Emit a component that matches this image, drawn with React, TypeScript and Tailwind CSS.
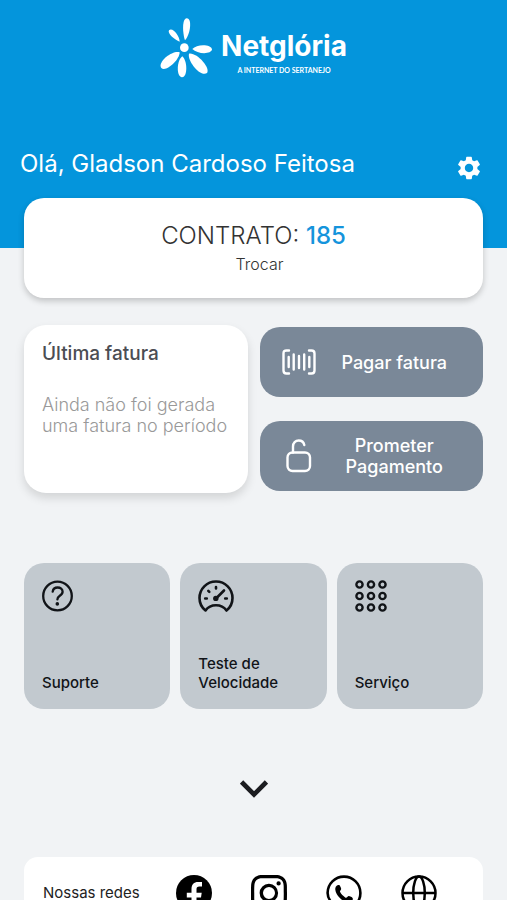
import { BsInstagram } from 'react-icons/bs';
import { MdSettings } from 'react-icons/md';

const FlowerMark = () => (
  <svg viewBox="30 24 159 180" className="w-[53px] h-[60px]" fill="#fff" aria-hidden="true">
    <circle cx="103" cy="113" r="13" />
    <path d="M105 91C99 76 94 27 110 25C129 25 119 78 105 91Z" />
    <path d="M89 95C74 91 51 69 57 61C67 50 89 78 89 95Z" />
    <path d="M127 117C140 101 184 102 186 118C184 134 142 133 127 117Z" />
    <path d="M117 131C141 127 182 174 171 189C152 203 111 153 117 131Z" />
    <path d="M97 139C112 151 114 201 96 202C78 200 80 151 97 139Z" />
    <path d="M89 127C89 150 47 188 34 174C21 158 65 120 89 127Z" />
  </svg>
);

const Barcode = () => (
  <svg viewBox="0 0 34 26" className="w-[34px] h-[26px]" fill="none" stroke="currentColor" strokeWidth="2.4" strokeLinecap="round" aria-hidden="true">
    <path d="M7 1.5H4.5Q1.5 1.5 1.5 4.5V21.5Q1.5 24.5 4.5 24.5H7M27 1.5H29.5Q32.5 1.5 32.5 4.5V21.5Q32.5 24.5 29.5 24.5H27" />
    <path d="M6.7 8V18M11.7 5.5V20.5M17 7V19M22.2 5.5V20.5M27.3 8V18" />
  </svg>
);

const OpenLock = () => (
  <svg viewBox="0 0 26 34" className="w-[26px] h-[34px]" fill="none" stroke="currentColor" strokeWidth="2.4" strokeLinecap="round" aria-hidden="true">
    <rect x="1.5" y="13.5" width="22.5" height="18.5" rx="5" />
    <path d="M7 13.5V7.5C7 4 9.5 1.5 12.7 1.5C15.5 1.5 17.7 3.2 18.3 6" />
  </svg>
);

const Help = () => (
  <svg viewBox="0 0 32 32" className="w-8 h-8" fill="none" stroke="currentColor" strokeWidth="2.3" strokeLinecap="round" strokeLinejoin="round" aria-hidden="true">
    <circle cx="15.5" cy="16" r="14.3" />
    <path d="M10.7 11.6C11.1 9 13 7.5 15.6 7.5C18.5 7.5 20.6 9.2 20.6 11.7C20.6 13.9 19.1 14.9 17.5 15.9C16.1 16.8 15.4 17.7 15.4 19.4" />
    <circle cx="15.3" cy="23.9" r="1.8" fill="currentColor" stroke="none" />
  </svg>
);

const Speedometer = () => (
  <svg viewBox="0 0 36 32" className="w-9 h-8" fill="none" stroke="currentColor" strokeWidth="2.6" strokeLinecap="round" strokeLinejoin="round" aria-hidden="true">
    <path d="M7.5 30.5C3.7 27.5 1.5 23.2 1.5 18C1.5 8.8 8.8 1.5 18 1.5C27.2 1.5 34.5 8.8 34.5 18C34.5 23.2 32.3 27.5 28.5 30.5C26 27 22.2 25.3 18 25.3C13.8 25.3 10 27 7.5 30.5Z" />
    <path d="M18 7V8.500M7.200 18.500H8.800M27.200 18.500H28.800M10.300 10.800L11.300 11.800M19 17.500L26 10.500" />
    <circle cx="17.8" cy="18.400" r="2.700" fill="currentColor" stroke="none" />
  </svg>
);

const DotGrid = () => (
  <svg viewBox="0 0 32 32" className="w-8 h-8" fill="none" stroke="currentColor" strokeWidth="2.400" aria-hidden="true">
    {[4.5, 16, 27.5].map((cy) =>
      [4.5, 16, 27.5].map((cx) => <circle key={`${cx}-${cy}`} cx={cx} cy={cy} r="3.100" />)
    )}
  </svg>
);

const Facebook = () => (
  <svg viewBox="0 0 36 36" className="w-9 h-9" aria-hidden="true">
    <circle cx="18" cy="18" r="18" fill="currentColor" />
    <path d="M15.500 34V22.500H10.800V17.700H15.500V14C15.500 9.500 18 7 22 7H26V11.500H23.300C21.300 11.500 20.500 12.400 20.500 14.200V17.700H25.700L25 22.500H20.500V34Z" fill="#fff" />
  </svg>
);

const WhatsApp = () => (
  <svg viewBox="0 0 36 36" className="w-9 h-9" aria-hidden="true">
    <path d="M2 34L4.300 26C2.600 23.500 1.600 20.800 1.600 18A16.400 16.400 0 1 1 18 34.400C15.200 34.400 12.400 33.600 10 32Z" fill="none" stroke="currentColor" strokeWidth="2.600" strokeLinejoin="round" />
    <path d="M12 10C10 10.500 9 12.500 9.300 14.800C10 20.500 16 26.500 21.700 27.300C24 27.600 26.200 26.500 26.800 24.500C27 23.200 26.500 22.600 25 21.800C23 20.700 22.300 20.700 21.300 21.900C20.500 22.900 20 23 18.900 22.200C17 20.900 15.400 19.200 14.300 17.300C13.800 16.500 14 16 14.600 15.300C15.500 14.200 15.300 13.500 14.300 11.400C13.700 10.100 13.200 9.700 12 10Z" fill="currentColor" />
  </svg>
);

const Site = () => (
  <svg viewBox="0 0 36 36" className="w-9 h-9" fill="none" stroke="currentColor" strokeWidth="2.500" aria-hidden="true">
    <circle cx="18" cy="18" r="16.500" />
    <ellipse cx="18" cy="18" rx="5.800" ry="16.500" />
    <path d="M1.500 18H34.500" />
  </svg>
);

const shortcuts = [
  { label: 'Suporte', icon: <Help /> },
  { label: 'Teste de Velocidade', icon: <Speedometer /> },
  { label: 'Serviço', icon: <DotGrid /> },
];

const networks = [
  { name: 'Facebook', icon: <Facebook /> },
  { name: 'Instagram', icon: <BsInstagram className="w-9 h-9" /> },
  { name: 'WhatsApp', icon: <WhatsApp /> },
  { name: 'Site', icon: <Site /> },
];

const App = () => {
  return (
    <div className="h-screen overflow-y-auto [scrollbar-width:none] bg-[#f1f3f5] font-['Inter','Liberation_Sans',sans-serif]">
      <header className="bg-[#0495dc] text-white pt-[18px] pb-[50px]">
        {/* Brand */}
        <div className="flex justify-center gap-2">
          <FlowerMark />
          <div className="flex flex-col items-center pt-3">
            <span className="text-[28px] leading-8 font-bold">Netglória</span>
            <span className="text-[7px] leading-4 font-bold font-['Lato',sans-serif]">A INTERNET DO SERTANEJO</span>
          </div>
        </div>

        {/* Greeting */}
        <div className="flex items-end justify-between pl-5 pr-6 pt-[70px] pb-4">
          <h1 className="text-2xl leading-8 pb-0.5">Olá, Gladson Cardoso Feitosa</h1>
          <button type="button" aria-label="Configurações">
            <MdSettings className="w-7 h-7" />
          </button>
        </div>
      </header>

      <main className="px-6 -mt-[50px]">
        {/* Contract */}
        <section className="rounded-[20px] bg-white pt-[22px] pb-[18px] text-center shadow-[0_3px_6px_rgba(0,0,0,0.2)]">
          <p className="text-2xl leading-8 font-light text-[#333]">
            CONTRATO: <span className="font-medium text-[#1594dc]">185</span>
          </p>
          <button type="button" className="block mx-auto pl-3 text-base leading-6 font-light text-[#333] mb-1">
            Trocar
          </button>
        </section>

        {/* Invoice and payment actions */}
        <div className="grid grid-cols-2 gap-3 mt-[27px]">
          <section className="rounded-[22px] bg-white px-[18px] pt-[17px] h-[168px] shadow-[0_5px_10px_rgba(0,0,0,0.13)]">
            <h2 className="text-[19px] leading-6 font-medium text-[#4b4d53]">Última fatura</h2>
            <p className="mt-7 text-lg leading-[21px] font-light text-[#999]">Ainda não foi gerada uma fatura no período</p>
          </section>
          <div className="flex flex-col justify-between py-0.5">
            <button type="button" className="flex items-center h-[70px] rounded-[20px] bg-[#7a8898] text-white pl-5 pr-3">
              <span className="flex justify-center w-[38px] shrink-0">
                <Barcode />
              </span>
              <span className="flex-1 text-lg leading-[21px] font-medium">Pagar fatura</span>
            </button>
            <button type="button" className="flex items-center h-[70px] rounded-[20px] bg-[#7a8898] text-white pl-5 pr-3">
              <span className="flex justify-center w-[38px] shrink-0">
                <OpenLock />
              </span>
              <span className="flex-1 text-lg leading-[21px] font-medium">Prometer Pagamento</span>
            </button>
          </div>
        </div>

        {/* Shortcuts */}
        <div className="grid grid-cols-3 gap-[10px] mt-[70px]">
          {shortcuts.map((item) => (
            <button
              key={item.label}
              type="button"
              className="flex flex-col items-start justify-between aspect-square rounded-[20px] bg-[#c2c9cf] text-[#111418] text-left px-[18px] pt-[17px] pb-[17px]"
            >
              {item.icon}
              <span className="text-[15px] leading-[19px] font-medium">{item.label}</span>
            </button>
          ))}
        </div>

        <button type="button" aria-label="Ver mais" className="block mx-auto mt-[71px]">
          <svg viewBox="0 0 28 18" className="w-7 h-[18px]" fill="none" stroke="#1c1c20" strokeWidth="4.6" aria-hidden="true">
            <path d="M1.6 2L14 14.4L26.4 2" />
          </svg>
        </button>

        {/* Social networks */}
        <footer className="flex items-center rounded-[14px] bg-white mt-[59px] mb-6 pl-[19px] pr-[46px] py-[18px]">
          <span className="text-[15px] leading-5 text-[#222]">Nossas redes</span>
          <nav className="flex flex-1 items-center justify-between pl-9">
            {networks.map((network) => (
              <a key={network.name} href="#" aria-label={network.name} className="text-black">
                {network.icon}
              </a>
            ))}
          </nav>
        </footer>
      </main>
    </div>
  );
};

export default App;
